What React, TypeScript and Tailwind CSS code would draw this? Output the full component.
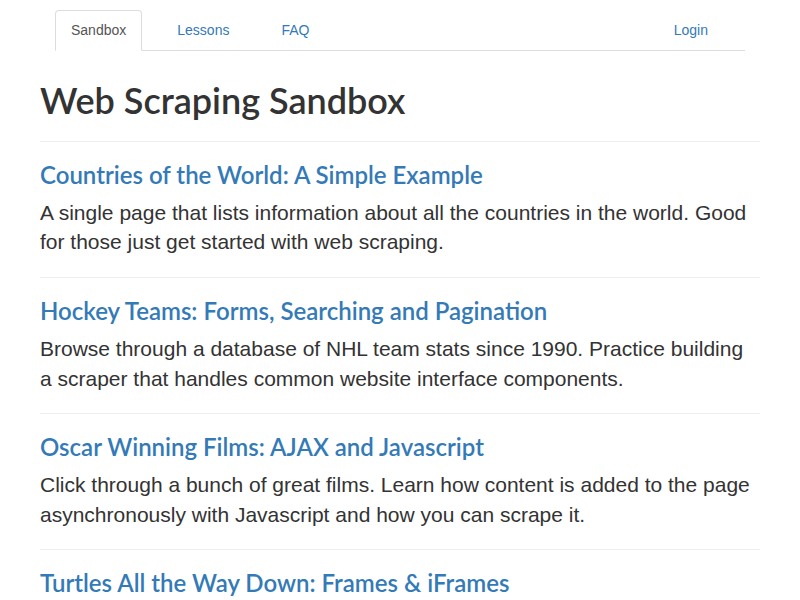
const sections = [
  {
    title: "Countries of the World: A Simple Example",
    text: "A single page that lists information about all the countries in the world. Good for those just get started with web scraping.",
  },
  {
    title: "Hockey Teams: Forms, Searching and Pagination",
    text: "Browse through a database of NHL team stats since 1990. Practice building a scraper that handles common website interface components.",
  },
  {
    title: "Oscar Winning Films: AJAX and Javascript",
    text: "Click through a bunch of great films. Learn how content is added to the page asynchronously with Javascript and how you can scrape it.",
  },
  {
    title: "Turtles All the Way Down: Frames & iFrames",
    text: "Some older sites might still use frames to break up thier pages. Modern ones might be using iFrames to expose data. Learn about turtles as you scrape content inside frames.",
  },
];

const lato = "font-['Lato','Liberation_Sans',sans-serif]";

export default function App() {
  return (
    <div className="min-h-screen bg-white text-[#333] font-['Liberation_Sans',Arial,sans-serif]">
      <div className="px-10">
        <nav className="px-[15px] pt-[10px]">
          <ul className="flex border-b border-[#ddd] text-[14px] leading-5">
            <li className="-mb-px mr-[19px]">
              <a className="block px-[15px] pt-[9px] pb-[10px] border border-[#ddd] border-b-white rounded-t bg-white text-[#555]">
                Sandbox
              </a>
            </li>
            <li className="-mb-px mr-[20px]">
              <a className="block px-[15px] pt-[9px] pb-[10px] border border-transparent text-[#337ab7]">Lessons</a>
            </li>
            <li className="-mb-px">
              <a className="block px-[15px] pt-[9px] pb-[10px] border border-transparent text-[#337ab7]">FAQ</a>
            </li>
            <li className="-mb-px ml-auto mr-[21px]">
              <a className="block px-[15px] pt-[9px] pb-[10px] border border-transparent text-[#337ab7]">Login</a>
            </li>
          </ul>
        </nav>

        <h1 className={`${lato} text-[36px] leading-[1.1] font-semibold mt-[30px] mb-[20px]`}>
          Web Scraping Sandbox
        </h1>

        {sections.map((s) => (
          <div key={s.title}>
            <hr className="border-0 border-t border-[#eee]" />
            <h3 className={`${lato} text-[24px] leading-[1.1] font-semibold text-[#337ab7] mt-[20px] mb-[10px]`}>
              <a>{s.title}</a>
            </h3>
            <p className="text-[21px] leading-[1.4] font-light mb-[20px]">{s.text}</p>
          </div>
        ))}
      </div>
    </div>
  );
}
